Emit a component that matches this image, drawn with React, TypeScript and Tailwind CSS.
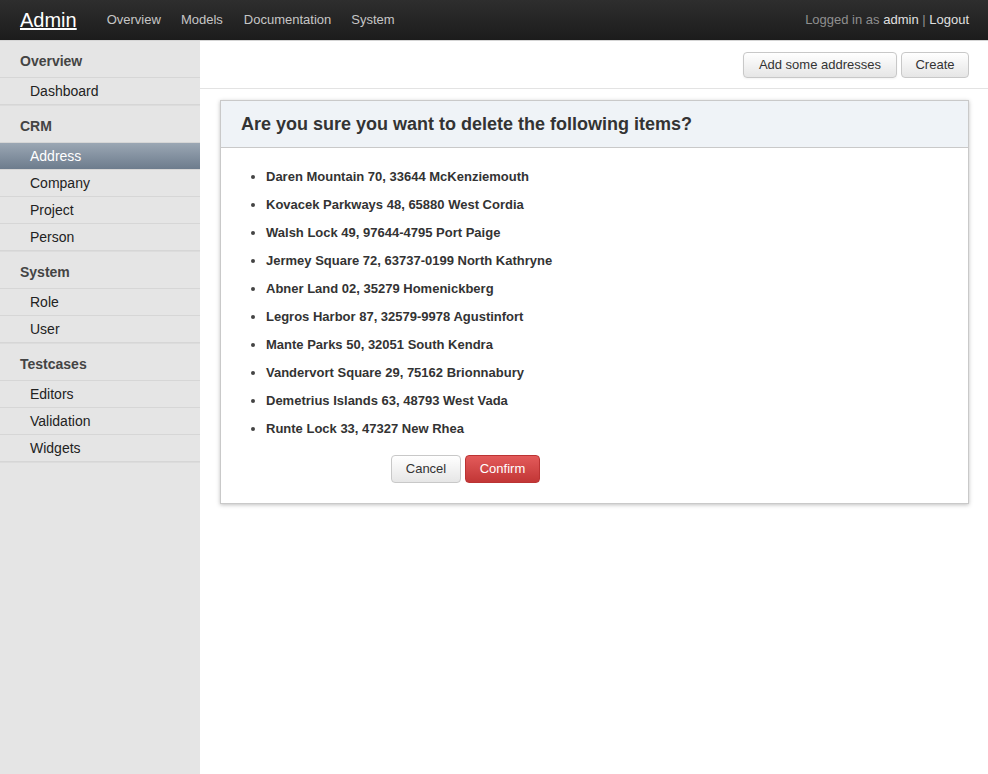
import React from "react";

const font = { fontFamily: '"Liberation Sans", Arial, sans-serif' };

const addresses = [
  "Daren Mountain 70, 33644 McKenziemouth",
  "Kovacek Parkways 48, 65880 West Cordia",
  "Walsh Lock 49, 97644-4795 Port Paige",
  "Jermey Square 72, 63737-0199 North Kathryne",
  "Abner Land 02, 35279 Homenickberg",
  "Legros Harbor 87, 32579-9978 Agustinfort",
  "Mante Parks 50, 32051 South Kendra",
  "Vandervort Square 29, 75162 Brionnabury",
  "Demetrius Islands 63, 48793 West Vada",
  "Runte Lock 33, 47327 New Rhea",
];

const sections: { title: string; items: string[] }[] = [
  { title: "Overview", items: ["Dashboard"] },
  { title: "CRM", items: ["Address", "Company", "Project", "Person"] },
  { title: "System", items: ["Role", "User"] },
  { title: "Testcases", items: ["Editors", "Validation", "Widgets"] },
];

export default function App() {
  return (
    <div className="w-[988px] h-[774px] flex flex-col bg-white text-[#333] overflow-hidden" style={font}>
      <div className="h-[40px] shrink-0 flex items-center bg-gradient-to-b from-[#2e2e2e] to-[#1c1c1c] px-[20px]">
        <span className="text-[20px] text-white underline leading-none">Admin</span>
        <div className="flex ml-[30px] gap-[20px] text-[13px] text-[#c6c6c6]">
          <span>Overview</span>
          <span>Models</span>
          <span className="ml-[1px]">Documentation</span>
          <span>System</span>
        </div>
        <div className="ml-auto mr-[-1px] text-[13px] text-[#8f8f8f]">
          Logged in as <span className="text-[#e0e0e0]">admin</span> | <span className="text-[#e0e0e0]">Logout</span>
        </div>
      </div>
      <div className="flex flex-1 min-h-0 border-t border-[#d5d5d5]">
        <div className="w-[200px] shrink-0 bg-[#e5e5e5]">
          {sections.map((s) => (
            <div key={s.title} className="border-b border-[#dcdcdc]">
              <div className="h-[37px] flex items-center pl-[20px] pt-[4px] text-[14px] font-bold text-[#444] border-b border-[#d6d6d6]">
                {s.title}
              </div>
              {s.items.map((it) =>
                it === "Address" ? (
                  <div
                    key={it}
                    className="h-[27px] flex items-center pl-[30px] text-[14px] text-white bg-gradient-to-b from-[#9ba7b4] to-[#6d7c8d] border-b border-[#d6d6d6]"
                  >
                    {it}
                  </div>
                ) : (
                  <div key={it} className="h-[27px] flex items-center pl-[30px] text-[14px] text-[#222] border-b border-[#d6d6d6]">
                    {it}
                  </div>
                )
              )}
            </div>
          ))}
        </div>
        <div className="flex-1 min-w-0">
          <div className="h-[48px] border-b border-[#e3e3e3] flex justify-end items-start pt-[11px] pr-[19px] gap-[4px]">
            <button className="h-[26px] px-[15px] text-[13px] text-[#333] border border-[#c8c8c8] rounded-[4px] bg-gradient-to-b from-white to-[#e6e6e6] shadow-[inset_0_1px_0_rgba(255,255,255,0.2),0_1px_2px_rgba(0,0,0,0.05)]">
              Add some addresses
            </button>
            <button className="h-[26px] w-[68px] text-[13px] text-[#333] border border-[#c8c8c8] rounded-[4px] bg-gradient-to-b from-white to-[#e6e6e6]">
              Create
            </button>
          </div>
          <div className="ml-[20px] mr-[19px] mt-[11px] border border-[#c9c9c9] shadow-[0_1px_4px_rgba(0,0,0,0.25)]">
            <div className="h-[47px] bg-[#eff3f7] border-b border-[#c9c9c9] flex items-center pl-[20px] text-[18px] font-bold text-[#333]">
              Are you sure you want to delete the following items?
            </div>
            <div className="pt-[15px] pb-[20px]">
              <ul className="list-disc pl-[45px] text-[13px] font-bold text-[#333] marker:text-[#444]">
                {addresses.map((a) => (
                  <li key={a} className="leading-[28px]">
                    {a}
                  </li>
                ))}
              </ul>
              <div className="flex gap-[4px] pl-[170px] mt-[12px]">
                <button className="h-[28px] w-[70px] text-[13px] text-[#333] border border-[#c8c8c8] rounded-[4px] bg-gradient-to-b from-white to-[#e6e6e6]">
                  Cancel
                </button>
                <button className="h-[28px] w-[75px] text-[13px] text-white border border-[#b33] rounded-[4px] bg-gradient-to-b from-[#e35a5a] to-[#c23636]">
                  Confirm
                </button>
              </div>
            </div>
          </div>
        </div>
      </div>
    </div>
  );
}
